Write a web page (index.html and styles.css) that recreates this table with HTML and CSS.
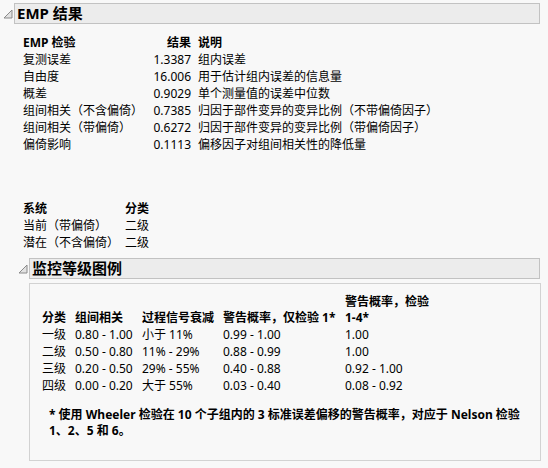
FILE: index.html
```html
<!DOCTYPE html>
<html lang="zh-CN">
<head>
<meta charset="utf-8">
<link rel="stylesheet" href="styles.css">
</head>
<body>
<div class="section s1">
  <div class="head">
    <svg class="tri" width="10" height="10" viewBox="0 0 10 10"><path d="M1 9 L9 1 L9 9 Z" fill="#e2e2e2" stroke="#8a8a8a" stroke-width="1" stroke-linejoin="miter"/></svg>
    <div class="title">EMP 结果</div>
  </div>
  <div class="body1">
    <div class="t1">
      <div class="c1 b">EMP 检验</div><div class="c2 b">结果</div><div class="c3 b">说明</div>
      <div class="c1">复测误差</div><div class="c2">1.3387</div><div class="c3">组内误差</div>
      <div class="c1">自由度</div><div class="c2">16.006</div><div class="c3">用于估计组内误差的信息量</div>
      <div class="c1">概差</div><div class="c2">0.9029</div><div class="c3">单个测量值的误差中位数</div>
      <div class="c1">组间相关（不含偏倚）</div><div class="c2">0.7385</div><div class="c3">归因于部件变异的变异比例（不带偏倚因子）</div>
      <div class="c1">组间相关（带偏倚）</div><div class="c2">0.6272</div><div class="c3">归因于部件变异的变异比例（带偏倚因子）</div>
      <div class="c1">偏倚影响</div><div class="c2">0.1113</div><div class="c3">偏移因子对组间相关性的降低量</div>
    </div>
    <div class="t2">
      <div class="b">系统</div><div class="b">分类</div>
      <div>当前（带偏倚）</div><div>二级</div>
      <div>潜在（不含偏倚）</div><div>二级</div>
    </div>
  </div>
  <div class="section s2">
    <div class="head">
      <svg class="tri" width="10" height="10" viewBox="0 0 10 10"><path d="M1 9 L9 1 L9 9 Z" fill="#e2e2e2" stroke="#8a8a8a" stroke-width="1"/></svg>
      <div class="title">监控等级图例</div>
    </div>
    <div class="box">
      <div class="t3">
        <div class="h">分类</div><div class="h">组间相关</div><div class="h">过程信号衰减</div><div class="h">警告概率，仅检验 1*</div><div class="h">警告概率，检验<br>1-4*</div>
        <div>一级</div><div>0.80 - 1.00</div><div>小于 11%</div><div>0.99 - 1.00</div><div>1.00</div>
        <div>二级</div><div>0.50 - 0.80</div><div>11% - 29%</div><div>0.88 - 0.99</div><div>1.00</div>
        <div>三级</div><div>0.20 - 0.50</div><div>29% - 55%</div><div>0.40 - 0.88</div><div>0.92 - 1.00</div>
        <div>四级</div><div>0.00 - 0.20</div><div>大于 55%</div><div>0.03 - 0.40</div><div>0.08 - 0.92</div>
      </div>
      <p class="note">* 使用 Wheeler 检验在 10 个子组内的 3 标准误差偏移的警告概率，对应于 Nelson 检验<br>1、2、5 和 6。</p>
    </div>
  </div>
</div>
</body>
</html>
```
FILE: styles.css
```css
html, body {
  margin: 0;
  padding: 0;
  background: #f8f8f8;
}
body {
  font-family: "Noto Sans", "Noto Sans CJK SC", sans-serif;
  font-size: 12px;
  color: #000;
  width: 548px;
  height: 468px;
  overflow: hidden;
}
.section.s1 {
  padding: 3px 8px 0 3px;
}
.head {
  display: flex;
  align-items: center;
}
.tri {
  flex: none;
  width: 10px;
  height: 10px;
  margin-right: 1px;
}
.title {
  flex: 1;
  height: 19px;
  line-height: 19px;
  background: #ececec;
  border: 1px solid #c2c2c2;
  padding-left: 2px;
  font-weight: bold;
  font-size: 15px;
}
.body1 {
  padding-left: 20px;
}
.b { font-weight: bold; }
.t1 {
  margin-top: 10px;
  display: grid;
  grid-template-columns: 127px 41px auto;
  line-height: 17px;
}
.t1 .c2 { text-align: right; }
.t1 .c3 { padding-left: 7px; }
.t2 {
  margin-top: 47px;
  display: grid;
  grid-template-columns: 102px auto;
  line-height: 17px;
}
.section.s2 {
  padding-left: 15px;
  margin-top: 7px;
}
.box {
  margin: 4px -1px 0 11px;
  border: 1px solid #d2d2d2;
  box-sizing: border-box;
  height: 178px;
}
.t3 {
  margin: 10px 0 0 12px;
  display: grid;
  grid-template-columns: 33px 67px 81px 122px auto;
  line-height: 17px;
  align-items: end;
}
.t3 .h { font-weight: bold; line-height: 16px; }
.note {
  margin: 13px 0 0 19px;
  font-weight: bold;
  line-height: 16px;
}
```
